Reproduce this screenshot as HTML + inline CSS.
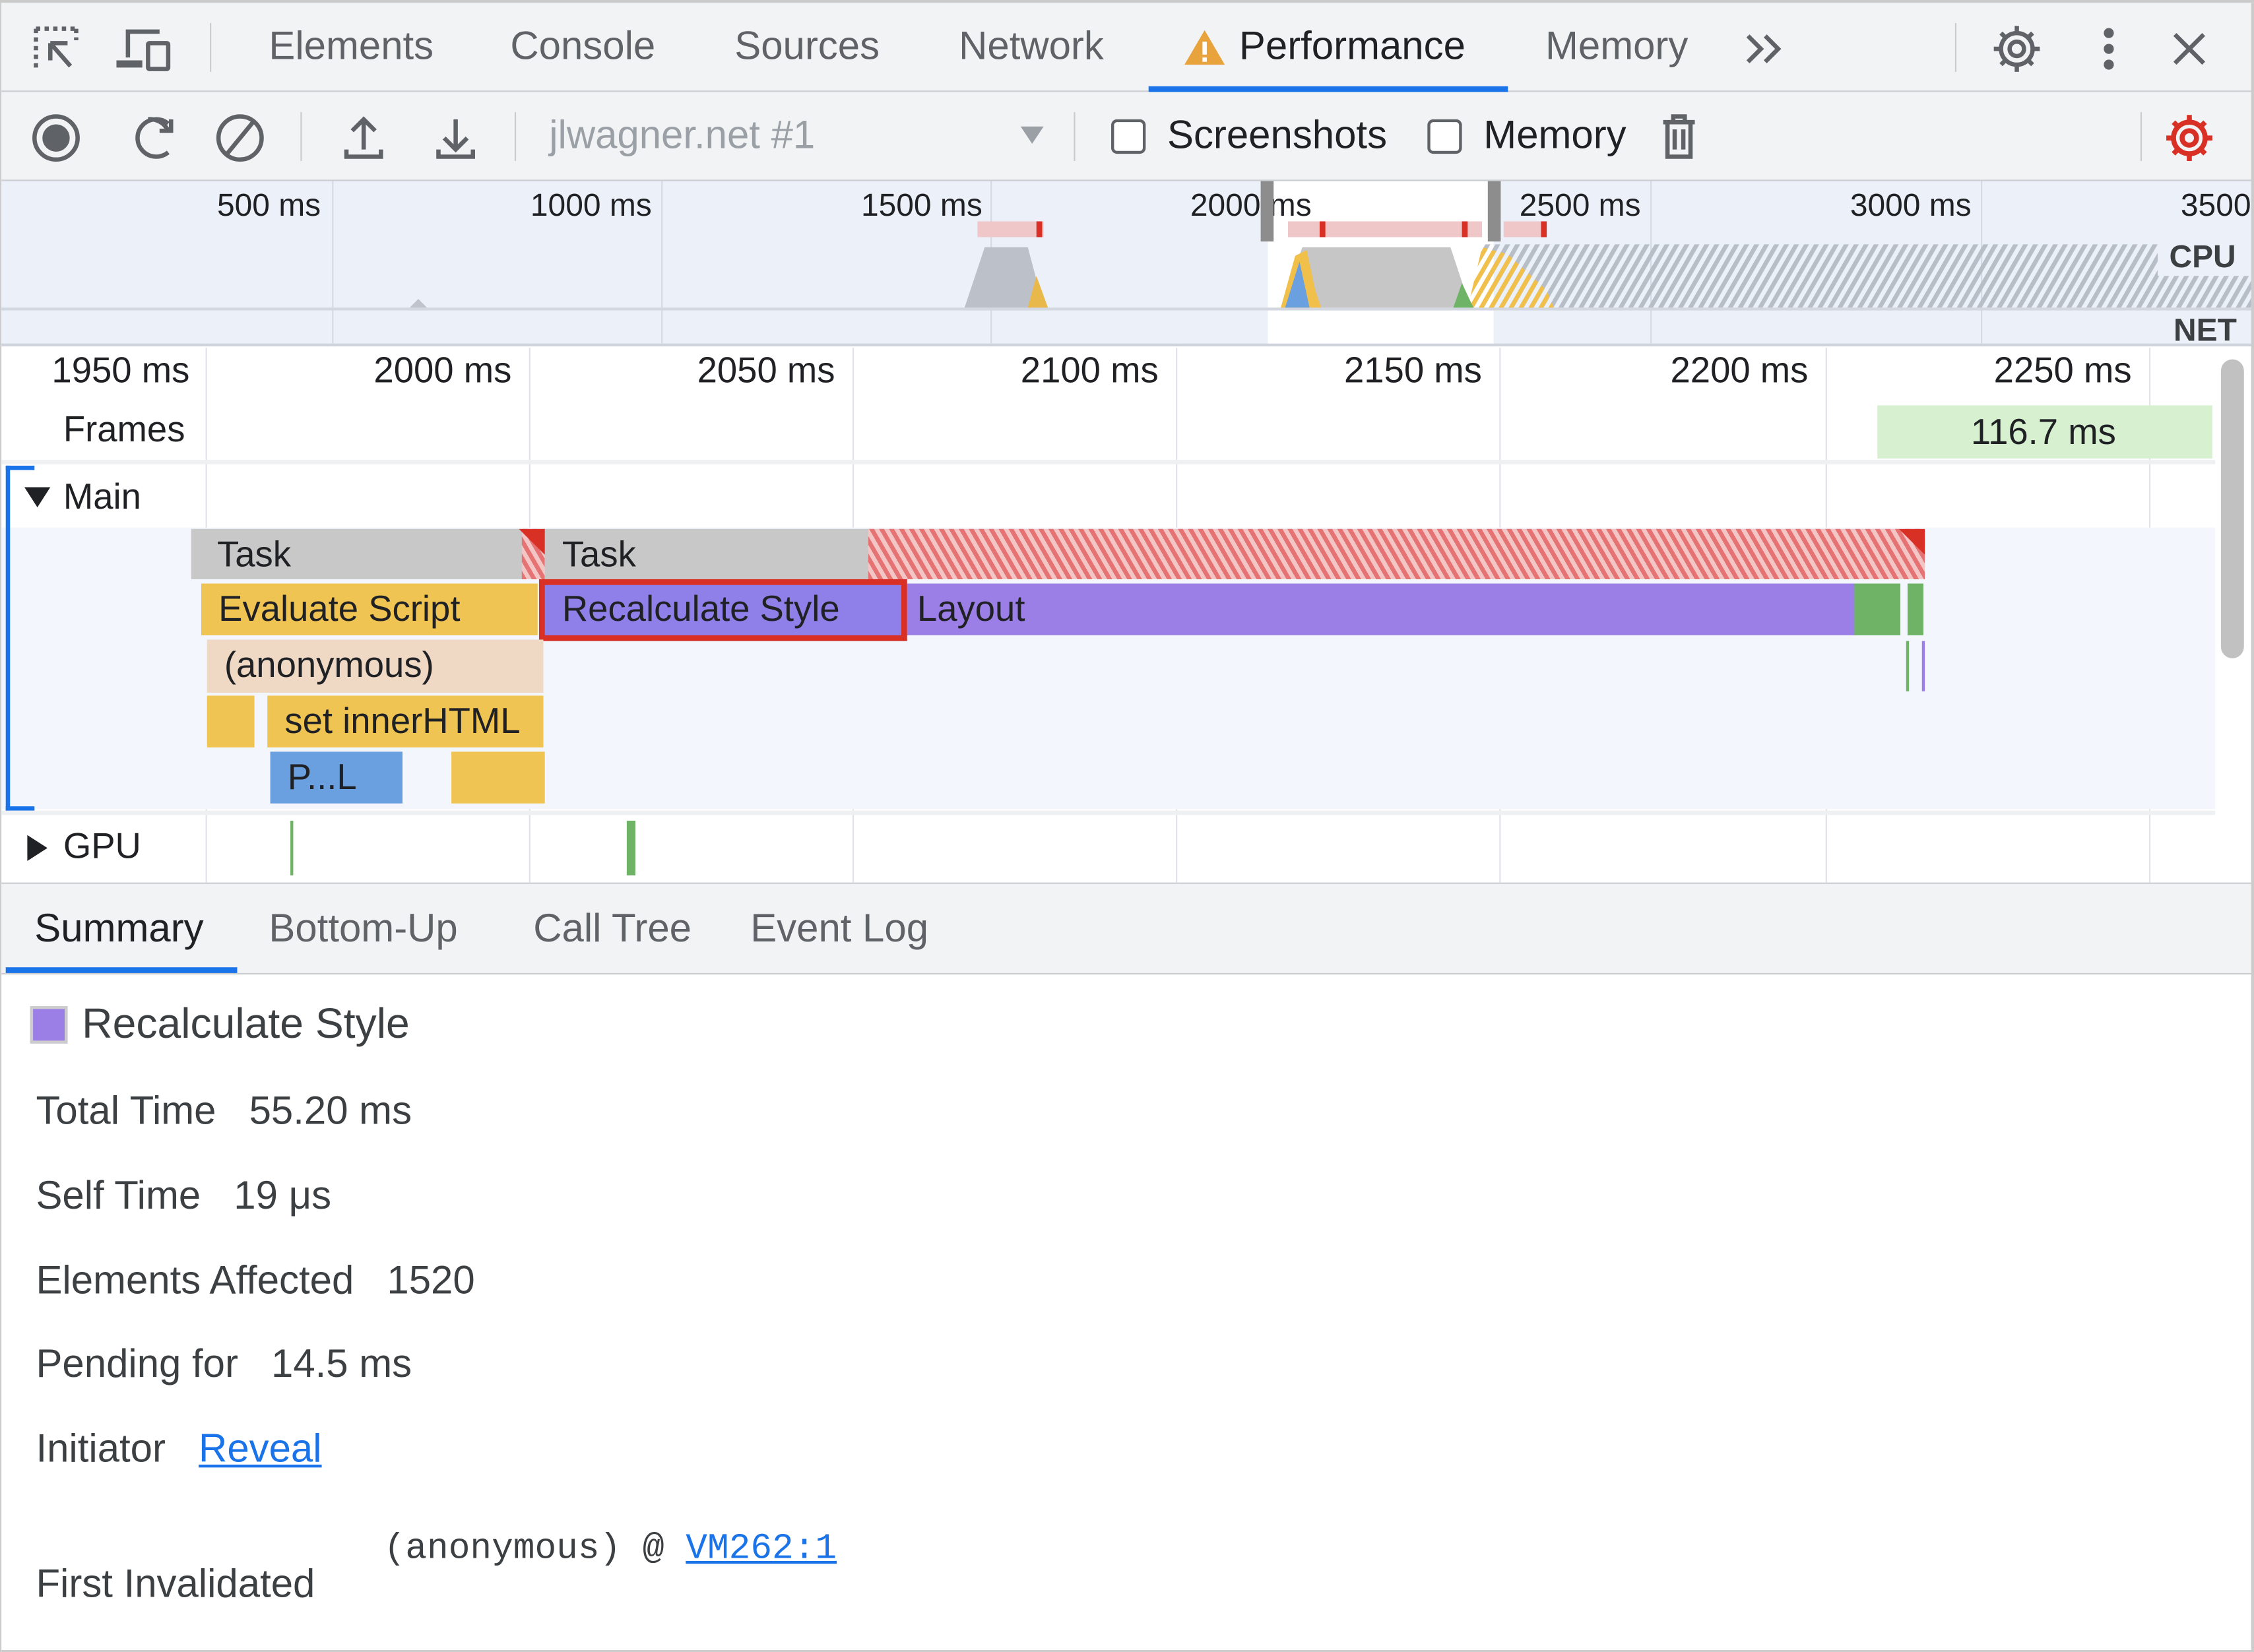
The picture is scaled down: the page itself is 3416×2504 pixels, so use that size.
<!DOCTYPE html>
<html><head><meta charset="utf-8"><style>
html,body{margin:0;padding:0;background:#fff;overflow:hidden}
body{width:3416px;height:2504px;position:relative}
#w{position:absolute;left:0;top:0;width:1568px;height:1150px;transform:scale(2.17857);transform-origin:0 0;font-family:"Liberation Sans",sans-serif;color:#202124;overflow:hidden;border-top:2px solid #ccc;border-left:1px solid #ccc;box-sizing:border-box}
.a{position:absolute}
.t{position:absolute;font-size:25px;white-space:nowrap;line-height:30px}
.L{font-size:27.5px}
.s{font-size:27.5px;color:#3c4043}
.s span{margin-left:23px}
.gl{position:absolute;width:1px;background:#e0e3e8}
.bar{position:absolute;font-size:25px;line-height:36px;padding-left:12px;box-sizing:border-box;white-space:nowrap;overflow:hidden}
</style></head><body><div id="w">
<!-- tab bar -->
<div class="a" style="left:0;top:0;width:1568px;height:61px;background:#f1f3f4;border-bottom:1px solid #cbcdd1"></div>
<svg class="a" style="left:18px;top:12px" width="120" height="40" viewBox="0 0 120 40" fill="none" stroke="#5f6368" stroke-width="3">
<path d="M6 6h28M6 6v30M34 6v8" stroke-dasharray="3 3"/><path d="M16 16l14 16M16 16h12M16 16v12" />
<path d="M70 26V8h22" /><rect x="62" y="28" width="18" height="5" fill="#5f6368" stroke="none"/><rect x="84" y="16" width="14" height="18" rx="1"/>
</svg>
<div class="a" style="left:145px;top:14px;width:1px;height:34px;background:#ccc"></div>
<div class="t L" style="left:186px;top:15px;color:#5f6368">Elements</div>
<div class="t L" style="left:354px;top:15px;color:#5f6368">Console</div>
<div class="t L" style="left:510px;top:15px;color:#5f6368">Sources</div>
<div class="t L" style="left:666px;top:15px;color:#5f6368">Network</div>
<svg class="a" style="left:822px;top:18px" width="30" height="26" viewBox="0 0 30 26"><path d="M15 1L29 25H1Z" fill="#e8a33d"/><rect x="13.5" y="9" width="3" height="9" fill="#fff"/><rect x="13.5" y="20" width="3" height="3" fill="#fff"/></svg>
<div class="t L" style="left:861px;top:15px;color:#202124">Performance</div>
<div class="a" style="left:798px;top:58px;width:250px;height:4px;background:#1a73e8"></div>
<div class="t L" style="left:1074px;top:15px;color:#5f6368">Memory</div>
<svg class="a" style="left:1212px;top:20px" width="30" height="24" viewBox="0 0 30 24" fill="none" stroke="#5f6368" stroke-width="3"><path d="M3 3l9 9-9 9M15 3l9 9-9 9"/></svg>
<div class="a" style="left:1359px;top:14px;width:1px;height:34px;background:#ccc"></div>
<svg class="a" style="left:1382px;top:12px" width="160" height="40" viewBox="0 0 160 40" fill="none" stroke="#5f6368" stroke-width="3">
<circle cx="20" cy="20" r="5"/><path d="M20 4v5M20 31v5M4 20h5M31 20h5M9 9l3.5 3.5M27.5 27.5L31 31M9 31l3.5-3.5M27.5 12.5L31 9"/><circle cx="20" cy="20" r="11"/>
<circle cx="84" cy="9" r="2" fill="#5f6368"/><circle cx="84" cy="20" r="2" fill="#5f6368"/><circle cx="84" cy="31" r="2" fill="#5f6368"/>
<path d="M130 10l20 20M150 10l-20 20"/>
</svg>
<!-- toolbar -->
<div class="a" style="left:0;top:62px;width:1568px;height:61px;background:#f1f3f4;border-bottom:1px solid #cbcdd1"></div>
<svg class="a" style="left:18px;top:74px" width="320" height="40" viewBox="0 0 320 40" fill="none" stroke="#5f6368" stroke-width="3">
<circle cx="20" cy="20" r="15"/><circle cx="20" cy="20" r="8" fill="#5f6368"/>
<path d="M98 10a13 13 0 1 0 0 20" /><path d="M84 7a14 14 0 0 1 14 8"/><path d="M92 15h8V7" fill="none"/>
<circle cx="148" cy="20" r="15"/><path d="M139 31l18-22"/>
<path d="M234 8v20M226 15l8-8 8 8M222 28v5h24v-5"/>
<path d="M298 7v20M290 20l8 8 8-8M286 28v5h24v-5"/>
</svg>
<div class="a" style="left:208px;top:76px;width:1px;height:34px;background:#ccc"></div>
<div class="a" style="left:357px;top:76px;width:1px;height:34px;background:#ccc"></div>
<div class="t L" style="left:381px;top:77px;color:#9aa0a6">jlwagner.net #1</div>
<div class="a" style="left:709px;top:86px;border-left:8px solid transparent;border-right:8px solid transparent;border-top:12px solid #9aa0a6;width:0;height:0"></div>
<div class="a" style="left:746px;top:76px;width:1px;height:34px;background:#ccc"></div>
<div class="a" style="left:772px;top:81px;width:24px;height:24px;border:2px solid #5f6368;border-radius:4px;box-sizing:border-box;background:#fff"></div>
<div class="t L" style="left:811px;top:77px">Screenshots</div>
<div class="a" style="left:992px;top:81px;width:24px;height:24px;border:2px solid #5f6368;border-radius:4px;box-sizing:border-box;background:#fff"></div>
<div class="t L" style="left:1031px;top:77px">Memory</div>
<svg class="a" style="left:1152px;top:76px" width="30" height="34" viewBox="0 0 30 34" fill="none" stroke="#5f6368" stroke-width="3"><path d="M4 7h22M11 7V3h8v4M7 7v24h16V7M12 12v14M18 12v14"/></svg>
<div class="a" style="left:1488px;top:76px;width:1px;height:34px;background:#ccc"></div>
<svg class="a" style="left:1502px;top:74px" width="40" height="40" viewBox="0 0 40 40" fill="none" stroke="#d93025" stroke-width="3.5"><circle cx="20" cy="20" r="5"/><circle cx="20" cy="20" r="11"/><path d="M20 4v5M20 31v5M4 20h5M31 20h5M9 9l3.5 3.5M27.5 27.5L31 31M9 31l3.5-3.5M27.5 12.5L31 9"/></svg>
<!-- overview -->
<div class="a" style="left:0;top:124px;width:1568px;height:113px;background:#ecf1f9;border-bottom:2px solid #cfd4dc"></div>
<div class="a" style="left:881px;top:124px;width:157px;height:113px;background:#fff"></div>
<div class="gl" style="left:230px;top:124px;height:113px;background:#d5dbe5"></div>
<div class="gl" style="left:459px;top:124px;height:113px;background:#d5dbe5"></div>
<div class="gl" style="left:688px;top:124px;height:113px;background:#d5dbe5"></div>
<div class="gl" style="left:1147px;top:124px;height:113px;background:#d5dbe5"></div>
<div class="gl" style="left:1377px;top:124px;height:113px;background:#d5dbe5"></div>
<div class="a" style="left:0;top:212px;width:1568px;height:2px;background:#d3d8e0"></div>
<div class="t" style="left:150px;top:126px;font-size:22px">500 ms</div>
<div class="t" style="left:368px;top:126px;font-size:22px">1000 ms</div>
<div class="t" style="left:598px;top:126px;font-size:22px">1500 ms</div>
<div class="t" style="left:827px;top:126px;font-size:22px">2000 ms</div>
<div class="t" style="left:1056px;top:126px;font-size:22px">2500 ms</div>
<div class="t" style="left:1286px;top:126px;font-size:22px">3000 ms</div>
<div class="t" style="left:1516px;top:126px;font-size:22px">3500</div>
<div class="a" style="left:679px;top:152px;width:46px;height:11px;background:#efc7c9"></div>
<div class="a" style="left:720px;top:152px;width:4px;height:11px;background:#d93025"></div>
<div class="a" style="left:895px;top:152px;width:135px;height:11px;background:#efc7c9"></div>
<div class="a" style="left:917px;top:152px;width:4px;height:11px;background:#d93025"></div>
<div class="a" style="left:1016px;top:152px;width:4px;height:11px;background:#d93025"></div>
<div class="a" style="left:1045px;top:152px;width:30px;height:11px;background:#efc7c9"></div>
<div class="a" style="left:1071px;top:152px;width:4px;height:11px;background:#d93025"></div>
<svg class="a" style="left:0;top:124px" width="1568" height="90" viewBox="0 124 1568 90">
<defs><pattern id="hp" width="6" height="6" patternUnits="userSpaceOnUse" patternTransform="rotate(30)"><rect width="3" height="6" fill="#b8bec8"/></pattern>
<pattern id="yp" width="6" height="6" patternUnits="userSpaceOnUse" patternTransform="rotate(30)"><rect width="3" height="6" fill="#f0c04a"/></pattern></defs>
<rect x="1030" y="168" width="538" height="44" fill="url(#hp)"/>
<path d="M1020 212L1030 170L1048 175L1075 200L1080 212Z" fill="url(#yp)"/>
<path d="M670 212L684 170L714 170L722 200L728 212Z" fill="#bcc1c9"/>
<path d="M714 212L720 190L728 212Z" fill="#e8b84a"/>
<path d="M284 212L290 206L296 212Z" fill="#c0c4ca"/>
<path d="M890 212L905 170L1008 170L1018 200L1022 212Z" fill="#c6c6c6"/>
<path d="M890 212L900 176L908 172L914 200L918 212Z" fill="#f0c04a"/>
<path d="M893 212L903 180L910 212Z" fill="#6a9fe0"/>
<path d="M1010 212L1016 195L1024 212Z" fill="#6fb366"/>
<rect x="1500" y="164" width="68" height="26" fill="#ecf1f9"/>
</svg>
<div class="a" style="left:876px;top:124px;width:9px;height:42px;background:#8d8d8d"></div>
<div class="a" style="left:1034px;top:124px;width:9px;height:42px;background:#8d8d8d"></div>
<div class="t" style="left:1508px;top:162px;font-size:22px;font-weight:bold;color:#3c4043">CPU</div>
<div class="t" style="left:1511px;top:213px;font-size:22px;font-weight:bold;color:#3c4043">NET</div>
<!-- main timeline -->
<div class="gl" style="left:142px;top:240px;height:372px"></div>
<div class="gl" style="left:367px;top:240px;height:372px"></div>
<div class="gl" style="left:592px;top:240px;height:372px"></div>
<div class="gl" style="left:817px;top:240px;height:372px"></div>
<div class="gl" style="left:1042px;top:240px;height:372px"></div>
<div class="gl" style="left:1269px;top:240px;height:372px"></div>
<div class="gl" style="left:1494px;top:240px;height:372px"></div>
<div class="t" style="left:35px;top:241px">1950 ms</div>
<div class="t" style="left:259px;top:241px">2000 ms</div>
<div class="t" style="left:484px;top:241px">2050 ms</div>
<div class="t" style="left:709px;top:241px">2100 ms</div>
<div class="t" style="left:934px;top:241px">2150 ms</div>
<div class="t" style="left:1161px;top:241px">2200 ms</div>
<div class="t" style="left:1386px;top:241px">2250 ms</div>
<div class="t" style="left:43px;top:282px">Frames</div>
<div class="a" style="left:1305px;top:280px;width:233px;height:37px;background:#d6f0d0"></div>
<div class="t" style="left:1370px;top:284px">116.7 ms</div>
<div class="a" style="left:0;top:318px;width:1540px;height:3px;background:#eef0f2"></div>
<div class="a" style="left:0;top:365px;width:1540px;height:196px;background:#f3f7fd"></div>
<div class="a" style="left:3px;top:322px;width:3px;height:240px;background:#1a73e8"></div>
<div class="a" style="left:3px;top:322px;width:20px;height:3px;background:#1a73e8"></div>
<div class="a" style="left:3px;top:559px;width:20px;height:3px;background:#1a73e8"></div>
<div class="a" style="left:16px;top:337px;border-left:9px solid transparent;border-right:9px solid transparent;border-top:14px solid #202124;width:0;height:0"></div>
<div class="t" style="left:43px;top:329px">Main</div>
<div class="bar" style="left:132px;top:366px;width:236px;height:35px;background:#c8c8c8;padding-left:18px">Task</div>
<div class="a" style="left:362px;top:366px;width:16px;height:35px;background:repeating-linear-gradient(60deg,#e57373 0 3px,#f3c5c5 3px 6px)"></div>
<div class="bar" style="left:378px;top:366px;width:226px;height:35px;background:#c8c8c8">Task</div>
<div class="a" style="left:603px;top:366px;width:735px;height:35px;background:repeating-linear-gradient(60deg,#e57373 0 3px,#f3c5c5 3px 6px)"></div>
<svg class="a" style="left:360px;top:366px" width="990" height="20" viewBox="0 0 990 20"><path d="M0 0h18v18Z" fill="#d93025"/><path d="M960 0h18v18Z" fill="#d93025"/></svg>
<div class="bar" style="left:139px;top:404px;width:234px;height:36px;background:#f0c453">Evaluate Script</div>
<div class="bar" style="left:630px;top:404px;width:660px;height:36px;background:#9b7fe6;padding-left:7px">Layout</div>
<div class="a" style="left:1289px;top:404px;width:32px;height:36px;background:#6fb366"></div>
<div class="a" style="left:1326px;top:404px;width:11px;height:36px;background:#6fb366"></div>
<div class="a" style="left:1325px;top:444px;width:2px;height:35px;background:#6fb366"></div>
<div class="a" style="left:1336px;top:444px;width:2px;height:35px;background:#9b7fe6"></div>
<div class="bar" style="left:374px;top:401px;width:256px;height:43px;background:#8f7fe8;border:4px solid #d93025;line-height:35px;padding-left:12px">Recalculate Style</div>
<div class="bar" style="left:143px;top:443px;width:234px;height:37px;background:#efd8c4">(anonymous)</div>
<div class="a" style="left:143px;top:482px;width:33px;height:36px;background:#f0c453"></div>
<div class="bar" style="left:185px;top:482px;width:192px;height:36px;background:#f0c453">set innerHTML</div>
<div class="bar" style="left:187px;top:521px;width:92px;height:36px;background:#6a9fe0">P...L</div>
<div class="a" style="left:313px;top:521px;width:65px;height:36px;background:#f0c453"></div>
<div class="a" style="left:0;top:562px;width:1540px;height:3px;background:#eef0f2"></div>
<div class="a" style="left:18px;top:579px;border-top:9px solid transparent;border-bottom:9px solid transparent;border-left:14px solid #202124;width:0;height:0"></div>
<div class="t" style="left:43px;top:572px">GPU</div>
<div class="a" style="left:201px;top:569px;width:2px;height:38px;background:#6fb366"></div>
<div class="a" style="left:435px;top:569px;width:6px;height:38px;background:#6fb366"></div>
<div class="a" style="left:1544px;top:248px;width:16px;height:208px;background:#c1c1c1;border-radius:8px"></div>
<!-- bottom -->
<div class="a" style="left:0;top:612px;width:1568px;height:62px;background:#f1f3f4;border-top:1px solid #cbcdd1;border-bottom:1px solid #cbcdd1"></div>
<div class="t L" style="left:23px;top:629px">Summary</div>
<div class="t L" style="left:186px;top:629px;color:#5f6368">Bottom-Up</div>
<div class="t L" style="left:370px;top:629px;color:#5f6368">Call Tree</div>
<div class="t L" style="left:521px;top:629px;color:#5f6368">Event Log</div>
<div class="a" style="left:3px;top:671px;width:161px;height:4px;background:#1a73e8"></div>
<div class="a" style="left:20px;top:698px;width:26px;height:26px;background:#9b7fe6;border:2px solid #ccc;box-sizing:border-box"></div>
<div class="t" style="left:56px;top:696px;font-size:29.5px;color:#3c4043">Recalculate Style</div>
<div class="t s" style="left:24px;top:756px">Total Time<span>55.20 ms</span></div>
<div class="t s" style="left:24px;top:815px">Self Time<span>19 μs</span></div>
<div class="t s" style="left:24px;top:874px">Elements Affected<span>1520</span></div>
<div class="t s" style="left:24px;top:932px">Pending for<span>14.5 ms</span></div>
<div class="t s" style="left:24px;top:991px">Initiator<span style="color:#1a73e8;text-decoration:underline">Reveal</span></div>
<div class="t" style="left:266px;top:1061px;font-family:'Liberation Mono',monospace;font-size:25px;color:#3c4043">(anonymous) @ <span style="color:#1a73e8;text-decoration:underline">VM262:1</span></div>
<div class="t s" style="left:24px;top:1085px">First Invalidated</div>
<div class="a" style="left:0;top:1146px;width:1568px;height:4px;background:#ccc"></div>
<div class="a" style="left:1565px;top:0;width:3px;height:1150px;background:#ccc"></div>
</div></body></html>
